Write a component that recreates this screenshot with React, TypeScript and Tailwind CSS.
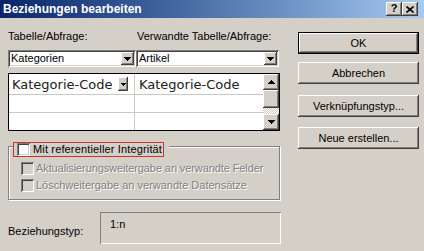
import React from "react";

const raised =
  "shadow-[inset_-1px_-1px_#404040,inset_1px_1px_#ffffff,inset_-2px_-2px_#808080,inset_2px_2px_#d4d0c8]";
const sunken =
  "shadow-[inset_1px_1px_#808080,inset_-1px_-1px_#ffffff,inset_2px_2px_#404040,inset_-2px_-2px_#d4d0c8]";

function DownArrow({ color = "#000" }: { color?: string }) {
  return (
    <svg width="7" height="4" viewBox="0 0 7 4" shapeRendering="crispEdges">
      <path d="M0 0h7v1h-1v1h-1v1h-1v1h-1v-1h-1v-1h-1v-1h-1z" fill={color} />
    </svg>
  );
}

function UpArrow() {
  return (
    <svg width="7" height="4" viewBox="0 0 7 4" shapeRendering="crispEdges">
      <path d="M0 4h7v-1h-1v-1h-1v-1h-1v-1h-1v1h-1v1h-1v1h-1z" fill="#000" />
    </svg>
  );
}

function Combo({ value, width }: { value: string; width: string }) {
  return (
    <div className={`${width} h-[17px] bg-white ${sunken} flex items-center pl-[3px] pr-[2px]`}>
      <span className="flex-1">{value}</span>
      <div className={`w-[13px] h-[13px] bg-[#d4d0c8] ${raised} flex items-center justify-center`}>
        <DownArrow />
      </div>
    </div>
  );
}

function Checkbox({ disabled }: { disabled?: boolean }) {
  return (
    <div className={`w-[13px] h-[13px] shrink-0 ${sunken} ${disabled ? "bg-[#d4d0c8]" : "bg-white"}`} />
  );
}

function Button({ label, primary }: { label: string; primary?: boolean }) {
  return (
    <div
      className={`w-[121px] h-[22px] flex items-center justify-center bg-[#d4d0c8] ${
        primary ? "border border-black" : ""
      }`}
    >
      <div className={`w-full h-full flex items-center justify-center ${raised}`}>{label}</div>
    </div>
  );
}

export default function App() {
  return (
    <div className="w-[424px] h-[251px] overflow-hidden bg-[#d4d0c8] text-[11px] leading-[13px] text-black font-['Liberation_Sans',Arial,sans-serif]">
      {/* title bar */}
      <div className="h-[18px] flex items-center justify-between bg-gradient-to-r from-[#0a246a] to-[#a6caf0] pl-[3px] pr-[6px]">
        <span className="text-white font-bold text-[12px] leading-[14px]">Beziehungen bearbeiten</span>
        <div className="flex">
          <div className={`w-[16px] h-[14px] bg-[#d4d0c8] ${raised} flex items-center justify-center font-bold text-[11px] pb-[1px]`}>
            ?
          </div>
          <div className={`w-[16px] h-[14px] bg-[#d4d0c8] ${raised} flex items-center justify-center`}>
            <svg width="8" height="7" viewBox="0 0 8 7">
              <path d="M0.5 0.5L7.5 6.5M7.5 0.5L0.5 6.5" stroke="#000" strokeWidth="1.6" />
            </svg>
          </div>
        </div>
      </div>

      <div className="flex pl-[8px] pt-[12px]">
        <div className="w-[273px] flex flex-col">
          <div className="flex">
            <span className="w-[129px]">Tabelle/Abfrage:</span>
            <span>Verwandte Tabelle/Abfrage:</span>
          </div>

          <div className="flex mt-[7px]">
            <Combo value="Kategorien" width="w-[128px]" />
            <Combo value="Artikel" width="w-[143px]" />
          </div>

          {/* field grid */}
          <div className="mt-[6px] w-[272px] h-[58px] border border-black bg-white flex text-[13px] leading-[15px] font-['DejaVu_Sans',sans-serif] text-[#202020]">
            <div className="w-[126px] border-r border-[#c8c8c8] flex flex-col">
              <div className="h-[21px] border-b border-[#c8c8c8] flex items-center pl-[3px] pr-[6px]">
                <span className="flex-1 whitespace-nowrap">Kategorie-Code</span>
                <div className={`w-[10px] h-[14px] shrink-0 bg-[#d4d0c8] ${raised} flex items-center justify-center`}>
                  <svg width="5" height="3" viewBox="0 0 5 3" shapeRendering="crispEdges">
                    <path d="M0 0h5v1h-1v1h-1v1h-1v-1h-1v-1h-1z" fill="#000" />
                  </svg>
                </div>
              </div>
              <div className="h-[18px] border-b border-[#c8c8c8]" />
              <div className="flex-1" />
            </div>
            <div className="w-[128px] flex flex-col">
              <div className="h-[21px] border-b border-[#c8c8c8] flex items-center pl-[4px] whitespace-nowrap">
                Kategorie-Code
              </div>
              <div className="h-[18px] border-b border-[#c8c8c8]" />
              <div className="flex-1" />
            </div>
            <div className="w-[16px] flex flex-col">
              <div className={`h-[16px] bg-[#d4d0c8] ${raised} flex items-center justify-center`}>
                <UpArrow />
              </div>
              <div className={`h-[18px] bg-[#d4d0c8] ${raised}`} />
              <div className="flex-1 bg-[repeating-conic-gradient(#ffffff_0_25%,#d4d0c8_0_50%)] bg-[length:2px_2px]" />
              <div className={`h-[16px] bg-[#d4d0c8] ${raised} flex items-center justify-center`}>
                <DownArrow />
              </div>
            </div>
          </div>

          {/* group box */}
          <div className="relative mt-[15px] w-[272px] h-[54px] border border-[#808080] shadow-[inset_1px_1px_#ffffff,1px_1px_#ffffff]">
            <div className="absolute left-[4px] top-[-5px] pr-[5px] bg-[#d4d0c8]">
              <div className="h-[15px] border border-[#d03030] flex items-center pl-[3px] pr-[1px] gap-[3px]">
                <Checkbox />
                <span className="tracking-[0.15px]">Mit referentieller Integrität</span>
              </div>
            </div>
            <div className="flex flex-col gap-[4px] pt-[15px] pl-[12px] text-[#808080] [text-shadow:1px_1px_#ffffff]">
              <div className="flex items-center gap-[2px] h-[13px]">
                <Checkbox disabled />
                <span className="tracking-[-0.1px]">Aktualisierungsweitergabe an verwandte Felder</span>
              </div>
              <div className="flex items-center gap-[2px] h-[13px]">
                <Checkbox disabled />
                <span>Löschweitergabe an verwandte Datensätze</span>
              </div>
            </div>
          </div>

          <div className="flex items-start mt-[12px]">
            <span className="w-[92px] mt-[13px]">Beziehungstyp:</span>
            <div className="w-[181px] h-[32px] shadow-[inset_1px_1px_#808080,inset_-1px_-1px_#ffffff] pt-[6px] pl-[10px]">
              1:n
            </div>
          </div>
        </div>

        <div className="ml-[17px] flex flex-col pt-[2px]">
          <Button label="OK" primary />
          <div className="mt-[8px]">
            <Button label="Abbrechen" />
          </div>
          <div className="mt-[11px]">
            <Button label="Verknüpfungstyp..." />
          </div>
          <div className="mt-[10px]">
            <Button label="Neue erstellen..." />
          </div>
        </div>
      </div>
    </div>
  );
}
